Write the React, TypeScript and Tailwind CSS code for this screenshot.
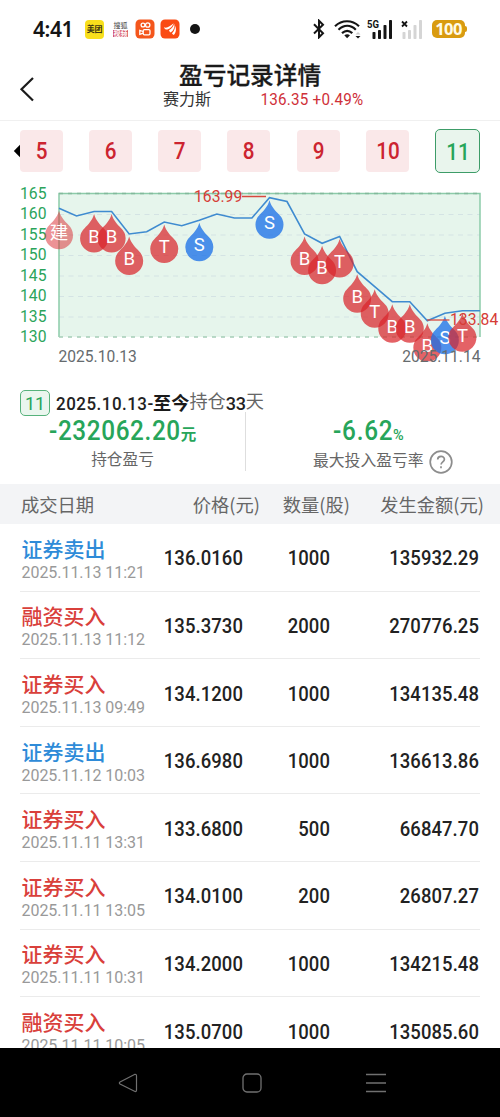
type Tone = 'red' | 'blue';

type Trade = {
  label: string;
  tone: Tone;
  time: string;
  price: string;
  qty: string;
  amount: string;
};

const trades: Trade[] = [
  { label: '证券卖出', tone: 'blue', time: '2025.11.13 11:21', price: '136.0160', qty: '1000', amount: '135932.29' },
  { label: '融资买入', tone: 'red', time: '2025.11.13 11:12', price: '135.3730', qty: '2000', amount: '270776.25' },
  { label: '证券买入', tone: 'red', time: '2025.11.13 09:49', price: '134.1200', qty: '1000', amount: '134135.48' },
  { label: '证券卖出', tone: 'blue', time: '2025.11.12 10:03', price: '136.6980', qty: '1000', amount: '136613.86' },
  { label: '证券买入', tone: 'red', time: '2025.11.11 13:31', price: '133.6800', qty: '500', amount: '66847.70' },
  { label: '证券买入', tone: 'red', time: '2025.11.11 13:05', price: '134.0100', qty: '200', amount: '26807.27' },
  { label: '证券买入', tone: 'red', time: '2025.11.11 10:31', price: '134.2000', qty: '1000', amount: '134215.48' },
  { label: '融资买入', tone: 'red', time: '2025.11.11 10:05', price: '135.0700', qty: '1000', amount: '135085.60' },
];

const periods = ['5', '6', '7', '8', '9', '10', '11'];

// chart space: 500 x 190, plot area from x 59 to 480
const PLOT_LEFT = 59;
const STEP = 17.54;
const lineY = [
  24.3, 32, 27.5, 27.5, 50, 47.7, 38, 41.7, 36.2, 30, 34, 34, 13.7, 17.5, 50, 59.3, 52.5, 87.7, 102.7, 117.7, 117.7,
  136.7, 129.3, 126.7, 126.7,
];

const drops = [
  { at: 0, label: '建' },
  { at: 2, label: 'B' },
  { at: 3, label: 'B' },
  { at: 4, label: 'B' },
  { at: 6, label: 'T' },
  { at: 8, label: 'S' },
  { at: 12, label: 'S' },
  { at: 14, label: 'B' },
  { at: 15, label: 'B' },
  { at: 16, label: 'T' },
  { at: 17, label: 'B' },
  { at: 18, label: 'T' },
  { at: 19, label: 'B' },
  { at: 20, label: 'B' },
  { at: 21, label: 'B' },
  { at: 22, label: 'S' },
  { at: 23, label: 'T' },
];

const pointX = (index: number) => PLOT_LEFT + index * STEP;

function dropOpacity(label: string) {
  if (label === '建') return 0.5;
  return label === 'S' ? 0.78 : 0.72;
}

function StatusBar() {
  return (
    <div className="flex h-[58px] items-center pl-[33px] pr-[33px]">
      <span className="w-[52px] font-['Noto_Sans'] text-[21px] font-semibold leading-none tracking-[-0.4px] text-[#151515]">
        4:41
      </span>
      <div className="flex h-[19px] w-[19px] items-center justify-center rounded-[4px] bg-[#f8df1c] text-[8px] font-bold leading-none tracking-[-0.3px] text-[#3b3410]">
        美团
      </div>
      <div className="ml-[7px] flex h-[19px] w-[19px] flex-col items-center justify-center text-[7px]">
        <span className="leading-[7px] text-[#444]">搜狐</span>
        <span className="mt-px bg-[#d5586c] px-[0.5px] font-bold leading-[7px] text-white">视频</span>
      </div>
      <svg className="ml-[5px]" width="20" height="20" viewBox="0 0 20 20" fill="none">
        <rect x="0.5" y="0.5" width="19" height="19" rx="4.5" fill="#f4561c" />
        <g stroke="#fff" strokeWidth="1.3">
          <circle cx="8" cy="6" r="1.9" />
          <circle cx="12.7" cy="6" r="2.2" />
          <rect x="8.2" y="10.6" width="6.8" height="5.2" rx="1.2" />
          <path d="M8.2 12.500 4.800 11.300v4l3.400-1.200" />
        </g>
      </svg>
      <svg className="ml-[5px]" width="20" height="20" viewBox="0 0 20 20">
        <rect x="0.5" y="0.5" width="19" height="19" rx="4.500" fill="#fa4b14" />
        <path
          d="M4 8.300c3 1.200 6-1 9.600-4-1.500 4-4.400 6.500-7.500 6.300C5 10.500 4.300 9.500 4 8.300zM9 11.300c2.600-1.500 4.300-3.800 5.200-6.600.8 3.400-.7 7.200-3.600 8.800-.9-.5-1.400-1.300-1.600-2.200zM12 14.300c2.200-2 3.100-4.800 2.900-7.900 1.600 3 1.500 6.800-1.100 9.500-.9-.2-1.500-.8-1.800-1.600z"
          fill="#fff"
        />
      </svg>
      <span className="ml-[10px] h-[10px] w-[10px] rounded-full bg-[#141414]" />

      <div className="ml-auto flex items-center">
        <svg width="14" height="20" viewBox="0 0 14 20" fill="none" stroke="#151515" strokeWidth="2">
          <path d="M2 5.300 11 14.300 7 18.300V1.700l4 4L2 14.500" />
        </svg>
        <svg className="ml-[8px]" width="27" height="21" viewBox="0 0 27 21" fill="none" stroke="#151515" strokeWidth="2.200">
          <path d="M1 7.200C8 .6 18 .6 25 7.200" />
          <path d="M4.500 10.700C10 5.600 16.500 5.600 21.800 10.700" />
          <path d="M8 14.100c3.400-3 7-3 10.300 0" />
          <path d="M10.300 16.300q2.900-2.200 5.700 0L13.100 19.300z" fill="#151515" stroke="none" />
          <path d="M21.500 15.500 24 13l2.500 2.500z" fill="#ccc" stroke="none" />
          <path d="M21.500 17 24 19.500l2.500-2.500z" fill="#151515" stroke="none" />
        </svg>
        <svg className="ml-[6px]" width="26" height="21" viewBox="0 0 26 21" fill="#151515">
          <text x="0" y="8.500" fontSize="10" fontWeight="700" fontFamily="Roboto, sans-serif" textLength="12" lengthAdjust="spacingAndGlyphs">
            5G
          </text>
          <rect x="5.500" y="13" width="3" height="7" rx="0.800" />
          <rect x="11" y="11" width="3" height="9" rx="0.800" />
          <rect x="16.500" y="6" width="3" height="14" rx="0.800" />
          <rect x="22" y="1" width="3" height="19" rx="0.800" />
        </svg>
        <svg className="ml-[7px]" width="24" height="21" viewBox="0 0 24 21" fill="#d5d5d5">
          <path d="m2 2.500 5 5m0-5-5 5" stroke="#151515" strokeWidth="1.800" />
          <rect x="2.500" y="13" width="3" height="7" rx="0.800" />
          <rect x="8" y="11" width="3" height="9" rx="0.800" />
          <rect x="13.500" y="6" width="3" height="14" rx="0.800" />
          <rect x="19" y="1" width="3" height="19" rx="0.800" />
        </svg>
        <div className="ml-[8px] flex h-[18px] w-[33px] items-center justify-center rounded-[5px] bg-[#d99b10] font-['Open_Sans'] text-[16.5px] font-bold leading-none tracking-[-0.6px] text-[#fffbe8]">
          100
        </div>
        <span className="h-[6px] w-[2px] rounded-r bg-[#d99b10]" />
      </div>
    </div>
  );
}

function Header() {
  return (
    <div className="flex h-[63px] border-b border-[#f0f0f0]">
      <svg className="ml-[19px] mt-[18px]" width="16" height="26" viewBox="0 0 16 26" fill="none" stroke="#1b1b1b" strokeWidth="2.2">
        <path d="M14 2 2.500 13.300 14 24.500" />
      </svg>
      <div className="ml-[128px] w-[200px]">
        <div className="ml-[16px] mt-[3px] whitespace-nowrap text-[23.7px] font-medium leading-[26px] text-[#1a1a1a] [-webkit-text-stroke:0.3px_#1a1a1a]">
          盈亏记录详情
        </div>
        <div className="mt-px flex justify-between whitespace-nowrap leading-[20px]">
          <span className="text-[16px] text-[#333]">赛力斯</span>
          <span className="mt-[2px] origin-right scale-x-95 font-[Roboto] text-[16px] tracking-[0.25px] text-[#cf3039]">
            136.35 +0.49%
          </span>
        </div>
      </div>
    </div>
  );
}

function PeriodTabs() {
  return (
    <div className="flex h-[64px] pt-[8px]">
      <svg className="mt-[15px] ml-[12.6px]" width="7" height="14" viewBox="0 0 7 14">
        <path d="M7 .8v12.400L.8 7z" fill="#000" />
      </svg>
      <div className="flex gap-[26.3px]">
        {periods.map((period) =>
          period === '11' ? (
            <div
              key={period}
              className="flex h-[44px] w-[45px] shrink-0 items-center justify-center rounded-[5px] border border-[#3d9c68] bg-[#e9f5ed] pt-[4px] font-[Roboto] text-[23px] font-medium text-[#27a55a]"
            >
              <span className="scale-x-90">{period}</span>
            </div>
          ) : (
            <div
              key={period}
              className="mt-px flex h-[42px] w-[43px] shrink-0 items-center justify-center rounded-[4px] bg-[#fae8e9] pt-[2px] font-[Roboto] text-[23px] font-medium text-[#cc2430]"
            >
              <span className="scale-x-90">{period}</span>
            </div>
          )
        )}
      </div>
    </div>
  );
}

function PriceChart() {
  const points = lineY.map((y, index) => `${pointX(index)},${y}`).join(' ');

  return (
    <svg className="mt-[-1px] block" width="500" height="190" viewBox="0 0 500 190" fontFamily="Roboto, 'Noto Sans CJK SC', sans-serif">
      <rect x="59" y="9.5" width="421" height="143.5" fill="#e6f5ec" />
      {[30.5, 51, 71.5, 92, 112.5, 133].map((y) => (
        <line key={y} x1="59" x2="480" y1={y} y2={y} stroke="#d4e3e4" strokeWidth="1.2" strokeDasharray="5 4.5" />
      ))}
      <path d="M59 153V9.500H480V153" fill="none" stroke="#8ccba9" strokeWidth="1.5" />
      <line x1="59" x2="480" y1="9.5" y2="9.5" stroke="#82b99b" strokeWidth="1.5" strokeDasharray="4 5" />
      <line x1="59" x2="480" y1="153" y2="153" stroke="#a5cdb7" strokeWidth="1.5" strokeDasharray="4 5" />

      {[165, 160, 155, 150, 145, 140, 135, 130].map((value, index) => (
        <text key={value} x="46.5" y={14.5 + index * 20.5} textAnchor="end" fontSize="15.7" fill="#2ba45b">
          {value}
        </text>
      ))}

      <polyline points={points} fill="none" stroke="#3f8bd0" strokeWidth="1.6" />

      <svg x="0" y="0" width="500" height="177.5">
        {drops.map((drop) => (
          <g key={drop.at} transform={`translate(${pointX(drop.at)} ${lineY[drop.at] + 27})`}>
            <path
              d="M0 -24.500C2 -17.500 6 -14 9.500 -10.300A14 14 0 1 1 -9.500 -10.300C-6 -14 -2 -17.500 0 -24.500Z"
              fill={drop.label === 'S' ? '#1e72e8' : '#d9252b'}
              fillOpacity={dropOpacity(drop.label)}
            />
            <text y={4} textAnchor="middle" fontSize={18.5} fill="#fff">
              {drop.label}
            </text>
          </g>
        ))}
      </svg>

      <g fontSize="15.7" fill="#d63c36">
        <text x="194" y="17.5">163.99</text>
        <line x1="242" x2="266" y1="12.5" y2="12.5" stroke="#d8483f" strokeWidth="1.5" />
        <text x="450" y="141">133.84</text>
        <line x1="427" x2="449.5" y1="136" y2="136" stroke="#d8483f" strokeWidth="1.3" />
      </g>
      <g fontSize="15.6" fill="#666b6e">
        <text x="58.5" y="178.3">2025.10.13</text>
        <text x="480.5" y="178.3" textAnchor="end">2025.11.14</text>
      </g>
    </svg>
  );
}

function Summary() {
  return (
    <div className="h-[110px] pt-[16px]">
      <div className="flex h-[26px] items-center pl-[20px] text-[18.2px] text-[#666]">
        <span className="mr-[6px] flex h-[26px] w-[30px] items-center justify-center rounded-[5px] border border-[#56b27b] bg-[#eaf6ee] font-[Roboto] text-[18px] text-[#27a55a]">
          11
        </span>
        <span className="w-[97px] origin-left scale-x-[0.94] font-[Roboto] text-[18px] font-medium tracking-[0.55px] text-[#222]">
          2025.10.13-
        </span>
        <span className="font-bold text-[#1a1a1a]">至今</span>
        <span className="relative -top-[2px]">持仓</span>
        <span className="w-[20px] font-[Roboto] text-[18px] font-medium tracking-[-0.3px] text-[#222]">33</span>
        <span className="relative -top-[2px]">天</span>
      </div>
      <div className="flex">
        <div className="flex w-[245px] flex-col items-center">
          <div className="flex items-baseline text-[#27a55a]">
            <span className="w-[132px] origin-left scale-x-90 whitespace-nowrap font-[Roboto] text-[27px] font-medium leading-[30px] tracking-[0.7px]">
              -232062.20
            </span>
            <span className="text-[15.5px] font-bold leading-[20px]">元</span>
          </div>
          <span className="text-[15.7px] leading-[26px] text-[#666]">持仓盈亏</span>
        </div>
        <span className="-mt-[4px] h-[59px] w-px bg-[#dedede]" />
        <div className="w-[254px]">
          <div className="ml-[87px] flex items-baseline font-[Roboto] text-[#27a55a]">
            <span className="w-[60px] origin-left scale-x-90 text-[27px] font-medium leading-[30px] tracking-[0.9px]">-6.62</span>
            <span className="text-[14.5px] font-medium">%</span>
          </div>
          <div className="ml-[67px] flex text-[#666]">
            <span className="whitespace-nowrap text-[15.8px] leading-[25px]">最大投入盈亏率</span>
            <svg className="ml-[5px] mt-[3px]" width="24" height="24" viewBox="0 0 24 24" fill="none" stroke="#8d8d8d" strokeWidth="1.7">
              <circle cx="12" cy="12" r="10.8" />
              <path d="M8.700 9.600c0-4.300 6.700-4.300 6.700-.3 0 2.500-3.300 2.700-3.300 5.300" />
              <path d="M12 16.300v2" />
            </svg>
          </div>
        </div>
      </div>
    </div>
  );
}

function TradeTable() {
  return (
    <>
      <div className="flex h-[40px] items-center whitespace-nowrap bg-[#f3f4f6] pl-[21px] pt-px text-[18.3px] text-[#666]">
        <span className="w-[119px]">成交日期</span>
        <span className="w-[120px] text-right">价格(元)</span>
        <span className="w-[90px] text-right">数量(股)</span>
        <span className="w-[134px] text-right">发生金额(元)</span>
      </div>
      <div className="h-[524px] overflow-hidden px-[20px]">
        {trades.map((trade) => (
          <div key={trade.time} className="flex h-[67.6px] items-center border-b border-[#ebebeb] pl-[1.5px]">
            <div className="w-[140px] whitespace-nowrap pt-[3px]">
              <div
                className={`text-[21px] font-medium leading-[26px] ${trade.tone === 'red' ? 'text-[#d9403b]' : 'text-[#2e8bd8]'}`}
              >
                {trade.label}
              </div>
              <div className="pt-[2px] font-[Roboto] text-[16px] leading-[20px] tracking-[-0.05px] text-[#999]">{trade.time}</div>
            </div>
            <div className="flex pt-[3px] font-[Roboto] text-[20.5px] font-medium tracking-[0.1px] text-[#222]">
              <span className="flex w-[81px] origin-right scale-x-90 justify-end">{trade.price}</span>
              <span className="flex w-[87px] origin-right scale-x-90 justify-end">{trade.qty}</span>
              <span className="flex w-[149px] origin-right scale-x-90 justify-end">{trade.amount}</span>
            </div>
          </div>
        ))}
      </div>
    </>
  );
}

function NavBar() {
  return (
    <div className="flex h-[69px] items-center justify-between bg-black pl-[118px] pr-[114px] text-[#707070]">
      <svg width="20" height="20" viewBox="0 0 20 20" fill="none" stroke="currentColor" strokeWidth="1.2">
        <path d="M17 1.300 2 9q-1.300 1 0 2l15 7.500q1.500.3 1.500-1.500V2.800q0-1.700-1.500-1.500z" />
      </svg>
      <svg width="20" height="20" viewBox="0 0 20 20" fill="none" stroke="currentColor" strokeWidth="1.3">
        <rect x="1" y="1" width="18" height="18" rx="4" />
      </svg>
      <svg width="20" height="20" viewBox="0 0 20 20" fill="none" stroke="currentColor" strokeWidth="1.5">
        <path d="M0 1.500h20M0 10h20M0 18.500h20" />
      </svg>
    </div>
  );
}

export default function App() {
  return (
    <div className="h-[1117px] w-[500px] overflow-hidden bg-white font-['Noto_Sans_CJK_SC',sans-serif]">
      <StatusBar />
      <Header />
      <PeriodTabs />
      <PriceChart />
      <Summary />
      <TradeTable />
      <NavBar />
    </div>
  );
}
